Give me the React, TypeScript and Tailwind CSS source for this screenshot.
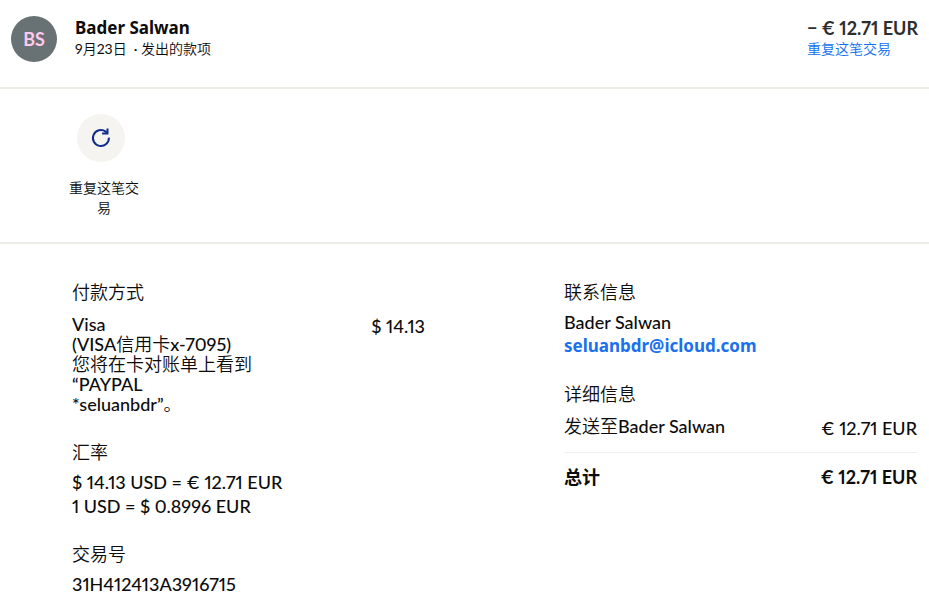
import React from 'react';

const RepeatIcon: React.FC = () => (
  <svg className="w-6 h-6 text-[#142c8e]" viewBox="0 0 24 24" fill="none" stroke="currentColor" strokeWidth={2} aria-hidden="true">
    <path d="M19.9 11.6a8 8 0 1 1-3.2-6l1.6 1.4" />
    <path d="M18.5 2.4v5.1h-5.4" />
  </svg>
);

// Chinese text is set lighter than the Latin text around it
const Han: React.FC<{ children: React.ReactNode }> = ({ children }) => (
  <span className="font-[350]">{children}</span>
);

const Header: React.FC = () => (
  <header className="flex items-start justify-between border-b-2 border-[#eeeee9] pt-4 pb-[25px] px-[11px]">
    <div className="flex items-start gap-[18px]">
      <div className="flex w-[46px] h-[46px] items-center justify-center rounded-full bg-[#687173] text-lg font-bold text-[#ffc8ee]">
        BS
      </div>
      <div>
        <h1 className="font-['Noto_Sans',sans-serif] text-[17px] leading-6 font-bold">Bader Salwan</h1>
        <p className="text-sm leading-[18px] font-normal">9<Han>月</Han>23<Han>日</Han> &nbsp;· <Han>发出的款项</Han></p>
      </div>
    </div>
    <div>
      <p className="text-lg leading-6 font-bold text-[#2c2e2f]">− € 12.71 EUR</p>
      <a href="#repeat" className="block text-sm leading-[18px] font-[350] text-[#0f6ff0]">重复这笔交易</a>
    </div>
  </header>
);

const Actions: React.FC = () => (
  <section className="border-b-2 border-[#eeeee9] pt-[25px] pb-6 pl-[68px]">
    <button type="button" className="block w-[72px] text-sm leading-5 font-[350]">
      <span className="ml-[9px] mb-4 flex w-12 h-12 items-center justify-center rounded-full bg-[#f5f4f0]">
        <RepeatIcon />
      </span>
      重复这笔交易
    </button>
  </section>
);

const PaymentColumn: React.FC = () => (
  <div>
    <h2 className="leading-6 font-[350]">付款方式</h2>
    <div className="mt-2.5 flex items-start justify-between leading-5">
      <p>
        Visa
        <br />
        (VISA<Han>信用卡</Han>x-7095)
        <br />
        <Han>您将在卡对账单上看到</Han>
        <br />
        “PAYPAL
        <br />
        *seluanbdr”<Han>。</Han>
      </p>
      <p className="leading-6">$ 14.13</p>
    </div>

    <h2 className="mt-[26px] leading-6 font-[350]">汇率</h2>
    <p className="mt-1.5 leading-6">$ 14.13 USD = € 12.71 EUR</p>
    <p className="leading-6">1 USD = $ 0.8996 EUR</p>

    <h2 className="mt-6 leading-6 font-[350]">交易号</h2>
    <p className="mt-1.5 leading-6">31H412413A3916715</p>
  </div>
);

const DetailsColumn: React.FC = () => (
  <div className="leading-6">
    <h2 className="font-[350]">联系信息</h2>
    <p className="mt-1.5">Bader Salwan</p>
    <a href="mailto:seluanbdr@icloud.com" className="block font-['Noto_Sans',sans-serif] text-[17px] font-bold text-[#1a70ee]">
      seluanbdr@icloud.com
    </a>

    <h2 className="mt-6 font-[350]">详细信息</h2>
    <div className="mt-2 flex items-end justify-between border-b border-[#eeeeee] pb-3">
      <span className="pb-0.5"><Han>发送至</Han>Bader Salwan</span>
      <span className="pt-0.5">€ 12.71 EUR</span>
    </div>
    <div className="mt-3 flex items-center justify-between font-bold">
      <span>总计</span>
      <span>€ 12.71 EUR</span>
    </div>
  </div>
);

const App: React.FC = () => {
  return (
    <main className="bg-white font-['Lato','Noto_Sans_CJK_SC',sans-serif] text-lg font-medium proportional-nums text-[#0c0c0d]">
      <Header />
      <Actions />
      <section className="grid grid-cols-2 gap-x-[139px] pt-9 pb-2 pl-[72px] pr-3">
        <PaymentColumn />
        <DetailsColumn />
      </section>
    </main>
  );
};

export default App;
